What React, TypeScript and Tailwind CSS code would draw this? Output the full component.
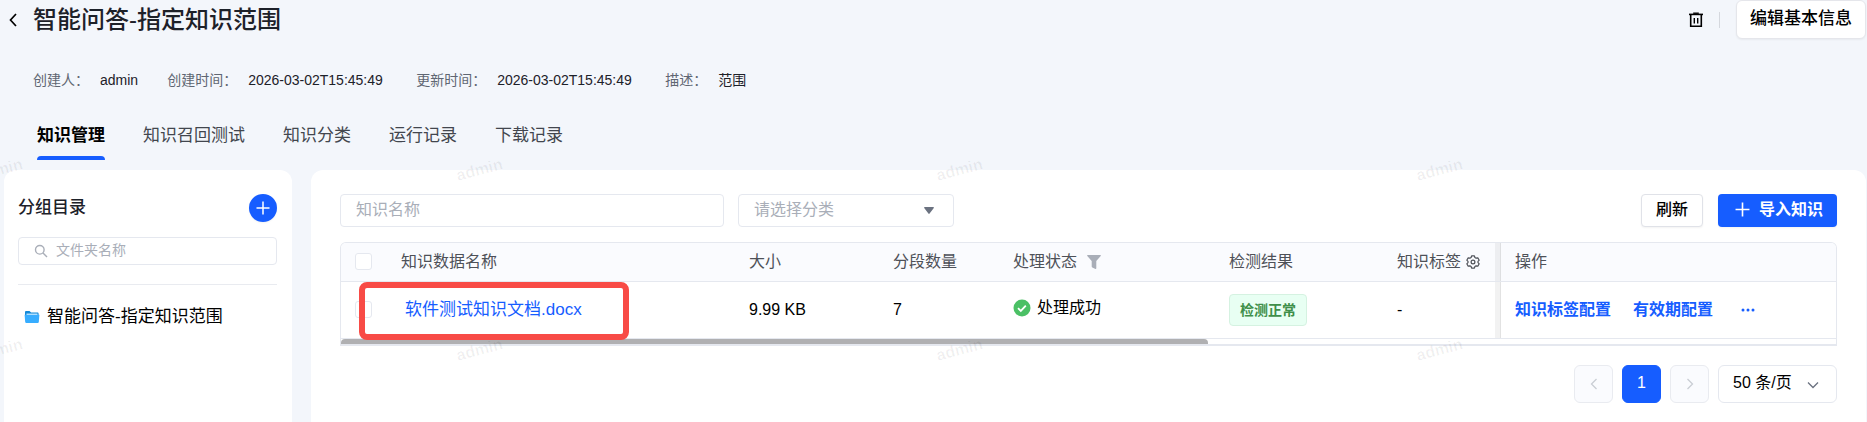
import { useState } from 'react';

interface InfoItem {
  label: string;
  value: string;
  width?: string;
}

interface KnowledgeRow {
  name: string;
  size: string;
  segments: number;
  status: string;
  result: string;
  tag: string;
}

const infoItems: InfoItem[] = [
  { label: '创建人：', value: 'admin' },
  { label: '创建时间：', value: '2026-03-02T15:45:49', width: 'min-w-[139px]' },
  { label: '更新时间：', value: '2026-03-02T15:45:49', width: 'min-w-[139px]' },
  { label: '描述：', value: '范围' }
];

const tabs = ['知识管理', '知识召回测试', '知识分类', '运行记录', '下载记录'];

const rows: KnowledgeRow[] = [
  {
    name: '软件测试知识文档.docx',
    size: '9.99 KB',
    segments: 7,
    status: '处理成功',
    result: '检测正常',
    tag: '-'
  }
];

function PlusIcon({ className }: { className: string }) {
  return (
    <svg className={className} viewBox="0 0 14 14" fill="none" stroke="currentColor" strokeWidth="1.5" aria-hidden="true">
      <path d="M7 0.5v13M0.5 7h13" />
    </svg>
  );
}

function ChevronIcon({ className, d }: { className: string; d: string }) {
  return (
    <svg className={className} viewBox="0 0 12 12" fill="none" stroke="currentColor" strokeWidth="1.3" aria-hidden="true">
      <path d={d} />
    </svg>
  );
}

function Checkbox({ label }: { label: string }) {
  return (
    <input
      type="checkbox"
      aria-label={label}
      className="block size-[17px] appearance-none rounded-[3px] border border-[#e5e8ef] bg-white checked:border-[#165dff] checked:bg-[#165dff]"
    />
  );
}

function PageHeader() {
  return (
    <header className="flex items-start justify-between">
      <div className="flex h-10 items-center">
        <button type="button" aria-label="返回" className="ml-[9px] flex w-6 items-center text-black">
          <svg className="h-3.5 w-2" viewBox="0 0 8 14" fill="none" stroke="currentColor" strokeWidth="1.7" aria-hidden="true">
            <path d="M7 1L1.5 7L7 13" />
          </svg>
        </button>
        <h1 className="text-[24px] leading-8 font-medium text-[#1d2129]">智能问答-指定知识范围</h1>
      </div>
      <div className="flex h-[39px] items-center pr-px">
        <button type="button" aria-label="删除" className="text-black">
          <svg className="h-4 w-3.5" viewBox="0 0 14 16" fill="none" stroke="currentColor" aria-hidden="true">
            <path d="M0 2.4h14" strokeWidth="1.6" />
            <path d="M4.2 1.2h5.6" strokeWidth="1.4" />
            <path d="M1.7 3v11.2h10.6V3" strokeWidth="1.6" />
            <path d="M5.3 6v5.5M8.7 6v5.5" strokeWidth="1.4" />
          </svg>
        </button>
        <span className="mx-4 h-4 w-px bg-[#d5d8de]" />
        <button
          type="button"
          className="h-[39px] rounded-md border border-[#e5e6eb] bg-white px-[13px] pb-0.5 text-[17px] leading-6 font-medium text-black shadow-xs"
        >
          编辑基本信息
        </button>
      </div>
    </header>
  );
}

function Sidebar() {
  return (
    <aside className="w-72 shrink-0 rounded-t-xl bg-white pt-6 pr-[15px] pl-3.5">
      <div className="flex items-center justify-between">
        <h2 className="text-[17px] leading-6 font-medium text-[#1d2129]">分组目录</h2>
        <button
          type="button"
          aria-label="新建分组"
          className="flex size-7 items-center justify-center rounded-full bg-[#165dff] text-white shadow-xs"
        >
          <PlusIcon className="size-3.5" />
        </button>
      </div>
      <label className="mt-[15px] flex h-7 items-center gap-2 rounded-sm border border-[#e5e8ef] pb-px pl-[15px]">
        <svg className="size-3.5 text-[#a9aeb8]" viewBox="0 0 14 14" fill="none" stroke="currentColor" strokeWidth="1.4" aria-hidden="true">
          <circle cx="5.8" cy="5.8" r="4.3" />
          <path d="M9 9l4 4" />
        </svg>
        <input
          type="text"
          aria-label="文件夹名称"
          placeholder="文件夹名称"
          className="min-w-0 flex-1 bg-transparent text-[14px] outline-none placeholder:text-[#a9aeb8]"
        />
      </label>
      <div className="mt-[19px] border-t border-[#e9ebf0]" />
      <div className="mt-5 flex items-center gap-[7px] pl-1.5">
        <svg className="size-4" viewBox="0 0 16 16" aria-hidden="true">
          <path d="M1 3.2c0-.7.5-1.2 1.2-1.2h3.3l1.6 1.4h6.3c.7 0 1.2.5 1.2 1.2V7H1z" fill="#1389d8" />
          <path d="M2.5 4.6h11V7h-11z" fill="#d9f0ff" />
          <path d="M.6 5.8h14.8l-.6 7.3c-.1.6-.5 1-1.1 1H2.3c-.6 0-1-.4-1.1-1z" fill="#37adff" />
        </svg>
        <span className="text-[17px] leading-6 text-black">智能问答-指定知识范围</span>
      </div>
    </aside>
  );
}

function Toolbar() {
  return (
    <div className="flex items-center justify-between">
      <div className="flex gap-3.5">
        <input
          type="text"
          aria-label="知识名称"
          placeholder="知识名称"
          className="h-[33px] w-96 rounded-sm border border-[#e5e8ef] px-[15px] pb-0.5 text-[16px] outline-none placeholder:text-[#a9aeb8]"
        />
        <div className="relative">
          <select
            aria-label="请选择分类"
            className="h-[33px] w-[216px] appearance-none rounded-sm border border-[#e5e8ef] bg-white px-[15px] pb-0.5 text-[16px] text-[#a9aeb8] outline-none"
          >
            <option>请选择分类</option>
          </select>
          <svg className="pointer-events-none absolute top-[13px] right-5 h-[7px] w-2.5 text-[#6b7280]" viewBox="0 0 10 7" fill="currentColor" aria-hidden="true">
            <path d="M0.8 0h8.4c.6 0 .9.6.6 1L5.6 6.6c-.3.4-.9.4-1.2 0L.2 1C-.1.6.2 0 .8 0z" />
          </svg>
        </div>
      </div>
      <div className="flex gap-[15px]">
        <button type="button" className="h-[33px] rounded-sm border border-[#e0e2e8] bg-white px-3.5 pb-0.5 text-[16px] font-medium text-black shadow-xs">
          刷新
        </button>
        <button type="button" className="flex h-[33px] items-center gap-[9px] rounded-sm bg-[#165dff] pr-3.5 pl-[17px] pb-0.5 text-[16px] font-bold text-white shadow-xs">
          <PlusIcon className="size-[15px]" />
          导入知识
        </button>
      </div>
    </div>
  );
}

function KnowledgeTable() {
  return (
    <div className="mt-[15px] overflow-hidden rounded-t-md border border-b-2 border-[#e5e8ef]">
      <table className="w-full table-fixed text-left text-[16px] leading-6">
        <colgroup>
          <col className="w-[46px]" />
          <col />
          <col className="w-36" />
          <col className="w-[120px]" />
          <col className="w-[216px]" />
          <col className="w-[168px]" />
          <col className="w-[118px]" />
          <col className="w-[335px]" />
        </colgroup>
        <thead>
          <tr className="h-[38px] border-b border-[#e5e8ef] bg-[#fafbfe] text-[#4e5158]">
            <th className="px-3.5"><Checkbox label="全选" /></th>
            <th className="px-3.5 font-normal">知识数据名称</th>
            <th className="px-3.5 font-normal">大小</th>
            <th className="px-3.5 font-normal">分段数量</th>
            <th className="px-3.5 font-normal">
              <span className="flex items-center gap-2.5">
                处理状态
                <svg className="size-3.5 text-[#a9aeb8]" viewBox="0 0 14 14" fill="currentColor" aria-hidden="true">
                  <path d="M.7 0h12.6c.6 0 .8.7.4 1.1L9.3 6v7.3c0 .5-.4.8-.8.6l-3.2-1.5c-.4-.2-.6-.5-.6-.9V6L.3 1.1C-.1.7.1 0 .7 0z" />
                </svg>
              </span>
            </th>
            <th className="px-3.5 font-normal">检测结果</th>
            <th className="pl-3.5 font-normal">
              <span className="flex items-center gap-[5px]">
                知识标签
                <svg className="size-3.5" viewBox="0 0 14 14" fill="none" stroke="currentColor" strokeWidth="1.2" strokeLinejoin="round" aria-hidden="true">
                  <path d="M5.6.9h2.8l.5 1.6 1.2.7 1.7-.4 1.4 2.4L12 6.4v1.2l1.2 1.2-1.4 2.4-1.7-.4-1.2.7-.5 1.6H5.6l-.5-1.6-1.2-.7-1.7.4L.8 8.8 2 7.6V6.4L.8 5.2l1.4-2.4 1.7.4 1.2-.7z" />
                  <circle cx="7" cy="7" r="1.9" />
                </svg>
              </span>
            </th>
            <th className="px-3.5 font-normal shadow-[-6px_0_0_#0000000d,-1px_0_0_#00000010]">操作</th>
          </tr>
        </thead>
        <tbody>
          {rows.map(row => (
            <tr key={row.name} className="h-[57px] border-b border-[#e5e8ef] text-black">
              <td className="px-3.5"><Checkbox label={row.name} /></td>
              <td className="relative pr-3.5 pl-[18px]">
                <a href="#" className="text-[17px] text-[#165dff]">{row.name}</a>
                {/* highlight frame around the document name */}
                <div className="pointer-events-none absolute top-0 -left-7 h-[58px] w-[270px] rounded-lg border-6 border-[#f84b46]" />
              </td>
              <td className="px-3.5">{row.size}</td>
              <td className="px-3.5">{row.segments}</td>
              <td className="px-3.5">
                <span className="flex items-center gap-1.5 pb-1">
                  <svg className="size-[18px]" viewBox="0 0 18 18" aria-hidden="true">
                    <circle cx="9" cy="9" r="8.5" fill="#4bc065" />
                    <path d="M5 9.2l2.8 2.7 5-5.2" fill="none" stroke="#fff" strokeWidth="1.8" />
                  </svg>
                  {row.status}
                </span>
              </td>
              <td className="px-3.5">
                <span className="inline-flex h-8 items-center rounded-sm border border-[#d5f2e1] bg-[#e8fff3] px-2.5 align-middle text-[14px] font-bold text-[#3f8f4a]">
                  {row.result}
                </span>
              </td>
              <td className="px-3.5">{row.tag}</td>
              <td className="px-3.5 font-bold text-[#165dff] shadow-[-6px_0_0_#0000000d,-1px_0_0_#00000010]">
                <div className="flex items-center">
                  <button type="button">知识标签配置</button>
                  <button type="button" className="ml-[22px]">有效期配置</button>
                  <button type="button" aria-label="更多" className="ml-7">
                    <svg className="h-1 w-3.5" viewBox="0 0 14 4" fill="currentColor" aria-hidden="true">
                      <circle cx="2" cy="2" r="1.5" />
                      <circle cx="7" cy="2" r="1.5" />
                      <circle cx="12" cy="2" r="1.5" />
                    </svg>
                  </button>
                </div>
              </td>
            </tr>
          ))}
        </tbody>
      </table>
      <div className="h-[5px]">
        <div className="h-full w-[58%] rounded-t-sm bg-[#b0b0b2]" />
      </div>
    </div>
  );
}

function Pagination() {
  const pageButton = 'flex h-[38px] w-[39px] items-center justify-center rounded-md border';
  return (
    <nav className="mt-[19px] flex justify-end gap-[9px] text-[16px]">
      <button type="button" aria-label="上一页" disabled className={`${pageButton} border-[#e9ebf0] bg-[#fafbfe] text-[#c9cdd4]`}>
        <ChevronIcon className="size-3" d="M8.5 1L3.5 6l5 5" />
      </button>
      <button type="button" className={`${pageButton} border-[#165dff] bg-[#165dff] pb-0.5 text-white`}>1</button>
      <button type="button" aria-label="下一页" disabled className={`${pageButton} border-[#e9ebf0] bg-[#fafbfe] text-[#c9cdd4]`}>
        <ChevronIcon className="size-3" d="M3.5 1l5 5-5 5" />
      </button>
      <div className="relative">
        <select aria-label="每页条数" className="h-[38px] w-[119px] appearance-none rounded-md border border-[#e5e8ef] bg-white pb-0.5 pl-3.5 text-black outline-none">
          <option>50 条/页</option>
        </select>
        <ChevronIcon className="pointer-events-none absolute top-3.5 right-[18px] size-3 text-[#6b7280]" d="M1 3.5l5 5 5-5" />
      </div>
    </nav>
  );
}

function Watermark() {
  return (
    <div aria-hidden="true" className="pointer-events-none absolute inset-0 overflow-hidden">
      <div className="absolute -top-[100px] -left-60 grid auto-rows-[180px] grid-cols-[repeat(4,480px)] place-items-center">
        {Array.from({ length: 12 }, (_, i) => (
          <span key={i} className="-rotate-15 text-[16px] leading-5 font-bold text-black/6">admin</span>
        ))}
      </div>
    </div>
  );
}

export default function App() {
  const [activeTab, setActiveTab] = useState('知识管理');

  return (
    <div className="relative flex min-h-screen flex-col overflow-hidden bg-[#f3f6fb] font-['Liberation_Sans','Noto_Sans_CJK_SC',sans-serif]">
      <PageHeader />

      <dl className="mt-7 flex h-6 items-center gap-[29px] pl-[33px] text-[14px] leading-6">
        {infoItems.map(item => (
          <div key={item.label} className="flex gap-[11px]">
            <dt className="text-[#5f6672]">{item.label}</dt>
            <dd className={`text-[#1d2129] ${item.width ?? ''}`}>{item.value}</dd>
          </div>
        ))}
      </dl>

      <nav className="mt-8 flex gap-[38px] pl-[37px] text-[17px] leading-6">
        {tabs.map(tab => (
          <button
            key={tab}
            type="button"
            onClick={() => setActiveTab(tab)}
            className={tab === activeTab ? 'font-bold text-black' : 'text-[#42464e]'}
          >
            {tab}
            <span className={`mt-2 block h-1 rounded-t-sm ${tab === activeTab ? 'bg-[#165dff]' : ''}`} />
          </button>
        ))}
      </nav>

      <main className="mt-2.5 flex flex-1 gap-[19px] pr-px pl-1">
        <Sidebar />
        <section className="min-w-0 flex-1 rounded-t-xl bg-white px-[29px] pt-6">
          <Toolbar />
          <KnowledgeTable />
          <Pagination />
        </section>
      </main>

      <Watermark />
    </div>
  );
}
